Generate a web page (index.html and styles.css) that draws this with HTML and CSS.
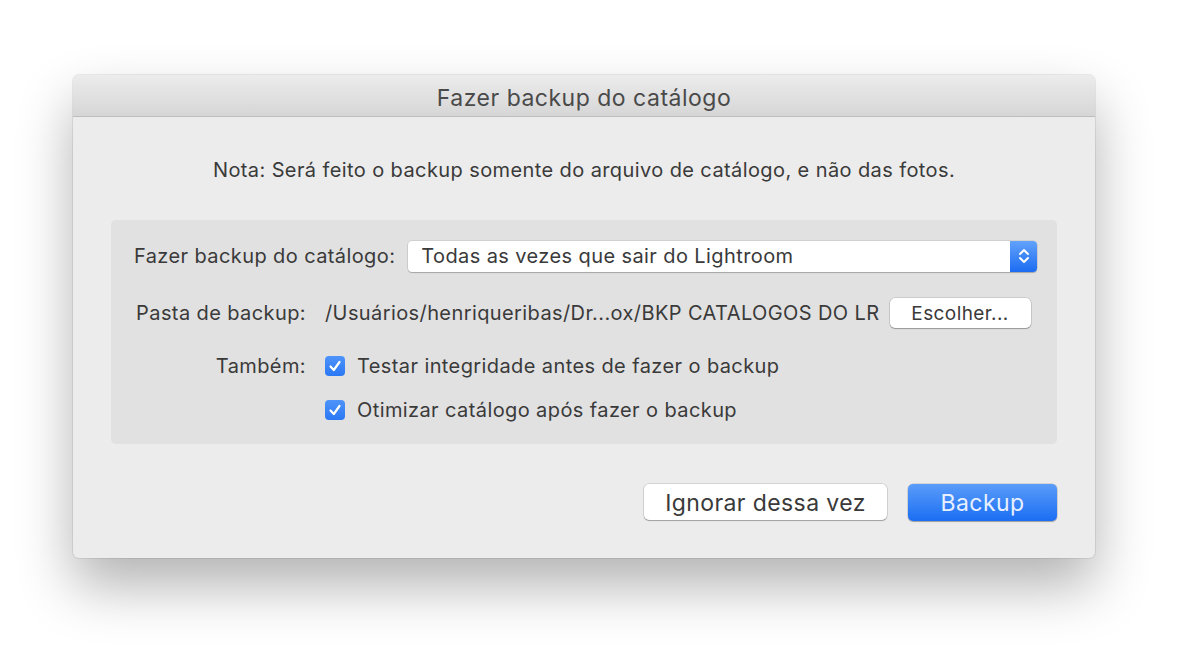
FILE: index.html
```html
<!DOCTYPE html>
<html>
<head>
  <meta charset="utf-8">
  <title>Fazer backup do catálogo</title>
  <link rel="stylesheet" href="styles.css">
</head>
<body>
  <div class="window">
    <div class="titlebar">Fazer backup do catálogo</div>
    <div class="content">
      <p class="note">Nota: Será feito o backup somente do arquivo de catálogo, e não das fotos.</p>

      <div class="panel">
        <div class="row row-first">
          <span class="label-wide">Fazer backup do catálogo:</span>
          <div class="popup">
            <span class="popup-text">Todas as vezes que sair do Lightroom</span>
            <span class="stepper">
              <svg width="14" height="20" viewBox="0 0 14 20">
                <path d="M3 8 L7 4 L11 8" fill="none" stroke="#fff" stroke-width="2" stroke-linecap="round" stroke-linejoin="round"/>
                <path d="M3 12 L7 16 L11 12" fill="none" stroke="#fff" stroke-width="2" stroke-linecap="round" stroke-linejoin="round"/>
              </svg>
            </span>
          </div>
        </div>

        <div class="row row-path">
          <span class="label">Pasta de backup:</span>
          <span class="path">/Usuários/henriqueribas/Dr...ox/BKP CATALOGOS DO LR</span>
          <button class="btn btn-small">Escolher...</button>
        </div>

        <div class="row row-check">
          <span class="label">Também:</span>
          <span class="check"><svg width="16" height="16" viewBox="0 0 16 16"><path d="M3.5 8.5 L6.8 12 L12.5 4" fill="none" stroke="#fff" stroke-width="2.2" stroke-linecap="round" stroke-linejoin="round"/></svg></span>
          <span>Testar integridade antes de fazer o backup</span>
        </div>

        <div class="row row-check">
          <span class="label"></span>
          <span class="check"><svg width="16" height="16" viewBox="0 0 16 16"><path d="M3.5 8.5 L6.8 12 L12.5 4" fill="none" stroke="#fff" stroke-width="2.2" stroke-linecap="round" stroke-linejoin="round"/></svg></span>
          <span>Otimizar catálogo após fazer o backup</span>
        </div>
      </div>

      <div class="actions">
        <button class="btn btn-ignore">Ignorar dessa vez</button>
        <button class="btn btn-primary">Backup</button>
      </div>
    </div>
  </div>
</body>
</html>
```

FILE: styles.css
```css
html, body {
  height: 100%;
}

body {
  background: #fff;
  margin: 0;
  padding: 75px 0 0 73px;
  box-sizing: border-box;
  font-family: Inter, "Liberation Sans", sans-serif;
  letter-spacing: 0.4px;
  color: #3a3a3a;
  overflow: hidden;
}

.window {
  width: 1022px;
  background: #ececec;
  border-radius: 6px;
  box-shadow: 0 0 0 1px rgba(0,0,0,0.07), 0 28px 55px rgba(0,0,0,0.3);
  overflow: hidden;
}

.titlebar {
  height: 41px;
  line-height: 46px;
  text-align: center;
  font-size: 23px;
  letter-spacing: 0.5px;
  color: #4a4a4a;
  background: linear-gradient(#ececec, #d6d6d6);
  border-bottom: 1px solid #bdbdbd;
}

.content {
  padding: 40px 38px 37px 38px;
}

.note {
  margin: 0;
  text-align: center;
  font-size: 20px;
  line-height: 26px;
}

.panel {
  margin-top: 37px;
  background: #e1e1e1;
  border-radius: 5px;
  padding: 20px 20px 21px 23px;
  font-size: 20px;
}

.row {
  display: flex;
  align-items: center;
}

.row-first {
  height: 32px;
}

.row-path {
  height: 32px;
  margin-top: 25px;
}

.row-check {
  height: 26px;
  margin-top: 24px;
}

.row-check + .row-check {
  margin-top: 18px;
}

.label-wide {
  margin-right: 13px;
}

.label {
  width: 172px;
  text-align: right;
  margin-right: 19px;
}

.popup {
  flex: 1;
  height: 31px;
  display: flex;
  align-items: center;
  background: #fff;
  border-radius: 4px;
  box-shadow: 0 0 0 0.5px rgba(0,0,0,0.15), 0 1px 1px rgba(0,0,0,0.2);
  overflow: hidden;
}

.popup-text {
  flex: 1;
  padding-left: 13px;
}

.stepper {
  width: 27px;
  height: 31px;
  display: flex;
  align-items: center;
  justify-content: center;
  background: linear-gradient(#62a2fa, #1c6cf2);
}

.path {
  margin-right: 10px;
}

.check {
  width: 20px;
  height: 20px;
  border-radius: 4px;
  background: linear-gradient(#4e93f9, #2a78f4);
  display: flex;
  align-items: center;
  justify-content: center;
  margin-right: 12px;
}

.btn {
  font-family: inherit;
  letter-spacing: 0.4px;
  background: #fff;
  border: none;
  border-radius: 5px;
  box-shadow: 0 0 0 0.5px rgba(0,0,0,0.2), 0 1px 1px rgba(0,0,0,0.25);
  color: #3a3a3a;
}

.btn-small {
  width: 141px;
  height: 30px;
  font-size: 19px;
}

.actions {
  margin-top: 40px;
  display: flex;
  justify-content: flex-end;
  gap: 21px;
}

.btn-ignore {
  width: 243px;
  height: 36px;
  font-size: 23px;
  padding-top: 2px;
}

.btn-primary {
  width: 149px;
  height: 37px;
  font-size: 23px;
  padding-top: 2px;
  color: #e8f0ff;
  background: linear-gradient(#5a9cf9, #1b6ef3);
}
```
